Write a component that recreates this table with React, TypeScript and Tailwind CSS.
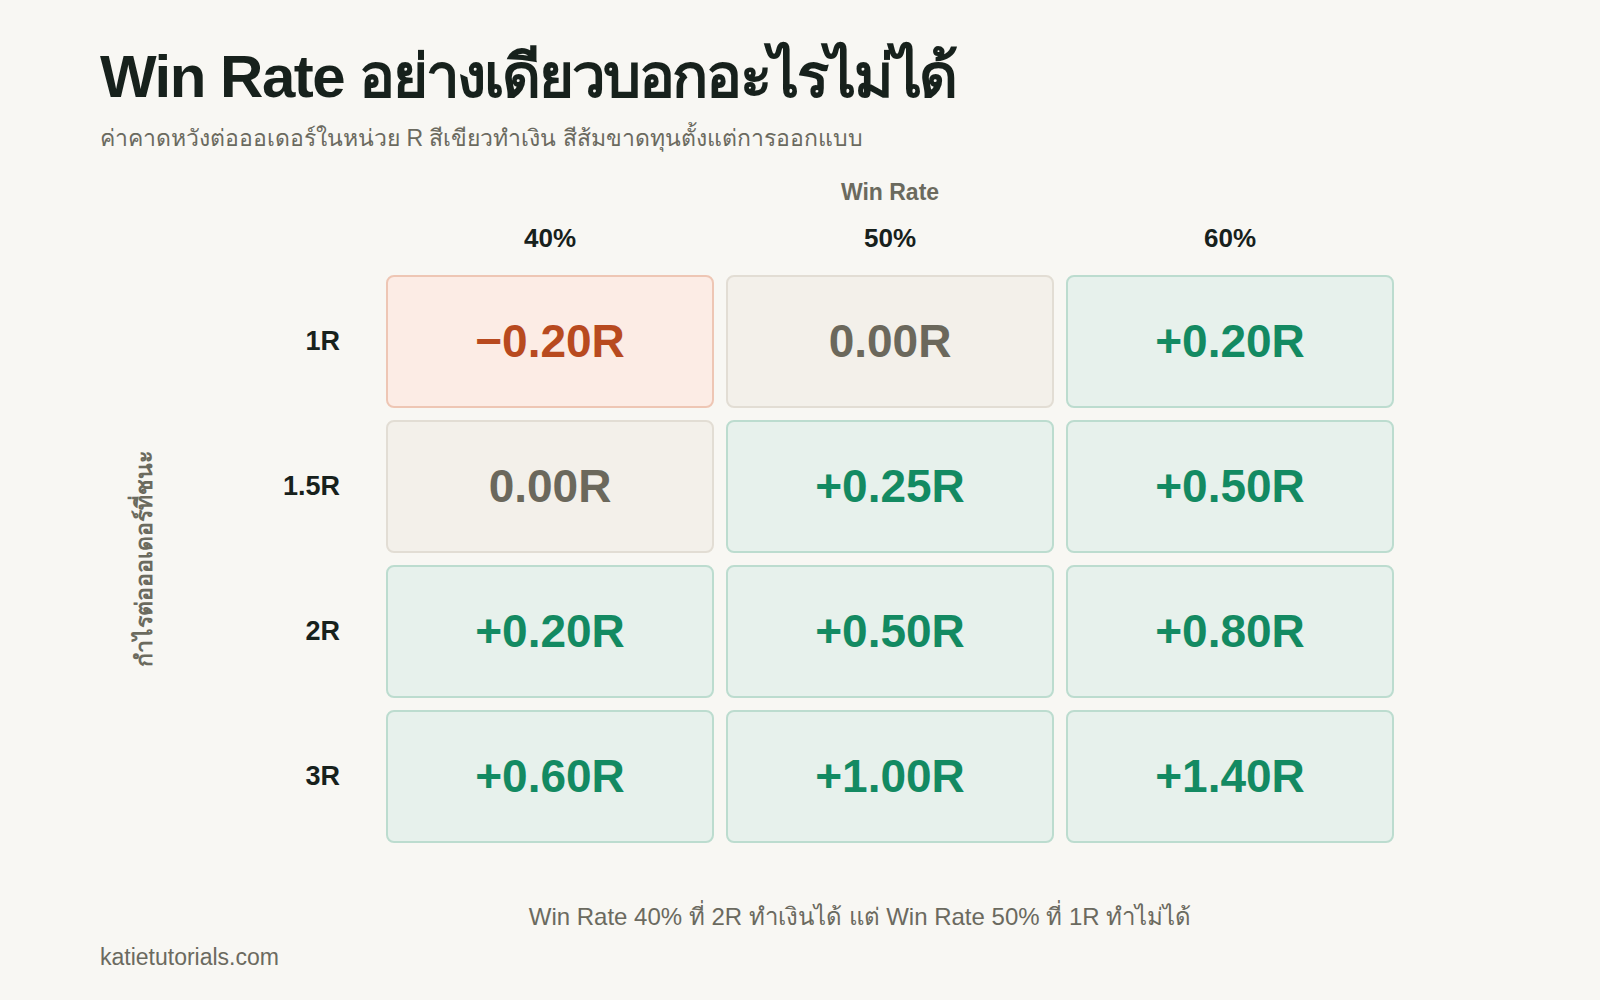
import React from "react";

type Tone = "neg" | "zero" | "pos";

const cols = ["40%", "50%", "60%"];

const rows: { label: string; cells: { value: string; tone: Tone }[] }[] = [
  {
    label: "1R",
    cells: [
      { value: "−0.20R", tone: "neg" },
      { value: "0.00R", tone: "zero" },
      { value: "+0.20R", tone: "pos" },
    ],
  },
  {
    label: "1.5R",
    cells: [
      { value: "0.00R", tone: "zero" },
      { value: "+0.25R", tone: "pos" },
      { value: "+0.50R", tone: "pos" },
    ],
  },
  {
    label: "2R",
    cells: [
      { value: "+0.20R", tone: "pos" },
      { value: "+0.50R", tone: "pos" },
      { value: "+0.80R", tone: "pos" },
    ],
  },
  {
    label: "3R",
    cells: [
      { value: "+0.60R", tone: "pos" },
      { value: "+1.00R", tone: "pos" },
      { value: "+1.40R", tone: "pos" },
    ],
  },
];

const toneClass: Record<Tone, string> = {
  neg: "bg-[#fcece5] border-[#eec6b4] text-[#b84a1f]",
  zero: "bg-[#f3f0ea] border-[#e2ddd4] text-[#6b685c]",
  pos: "bg-[#e7f1ec] border-[#bcdccf] text-[#138a62]",
};

const Cell = ({ value, tone }: { value: string; tone: Tone }) => (
  <div
    className={`h-[133px] rounded-[8px] border-2 flex items-center justify-center text-[46px] font-bold ${toneClass[tone]}`}
  >
    {value}
  </div>
);

export default function App() {
  return (
    <div className="w-[1600px] h-[1000px] bg-[#f8f7f3] font-['Liberation_Sans',sans-serif] text-[#17211c] pl-[100px] pt-[41px] flex flex-col">
      <h1 className="text-[60px] leading-[72px] font-bold tracking-tight">
        Win Rate <span className="tracking-[-0.04em]">อย่างเดียวบอกอะไรไม่ได้</span>
      </h1>
      <p className="text-[23px] leading-[30px] text-[#6b6a5f] mt-[10px]">
        ค่าคาดหวังต่อออเดอร์ในหน่วย R สีเขียวทำเงิน สีส้มขาดทุนตั้งแต่การออกแบบ
      </p>

      <div className="flex mt-[25px]">
        {/* axis label */}
        <div className="w-[88px] flex items-end">
          <div className="h-[568px] w-full flex items-center justify-center">
            <span className="[writing-mode:vertical-rl] rotate-180 text-[23px] font-semibold text-[#6b6a5e]">
              กำไรต่อออเดอร์ที่ชนะ
            </span>
          </div>
        </div>

        {/* row labels */}
        <div className="w-[152px] flex flex-col justify-end">
          <div className="flex flex-col gap-[12px]">
            {rows.map((r) => (
              <div
                key={r.label}
                className="h-[133px] flex items-center justify-end text-[27px] font-bold"
              >
                {r.label}
              </div>
            ))}
          </div>
        </div>

        {/* grid */}
        <div className="ml-[46px] w-[1008px] flex flex-col">
          <div className="text-center text-[23px] font-bold text-[#6b6a5e] leading-[28px]">
            Win Rate
          </div>
          <div className="grid grid-cols-3 gap-x-[12px] mt-[17px]">
            {cols.map((c) => (
              <div key={c} className="text-center text-[26px] font-bold leading-[30px]">
                {c}
              </div>
            ))}
          </div>
          <div className="grid grid-cols-3 gap-[12px] mt-[22px]">
            {rows.map((r) =>
              r.cells.map((c, i) => <Cell key={r.label + i} value={c.value} tone={c.tone} />)
            )}
          </div>
        </div>
      </div>

      <div className="mt-[58px] w-[1520px] text-center text-[24px] text-[#6b6a5f] leading-[32px]">
        Win Rate 40% ที่ 2R ทำเงินได้ แต่ Win Rate 50% ที่ 1R ทำไม่ได้
      </div>
      <div className="mt-[9px] text-[23px] text-[#6b6a5f] leading-[30px]">
        katietutorials.com
      </div>
    </div>
  );
}
